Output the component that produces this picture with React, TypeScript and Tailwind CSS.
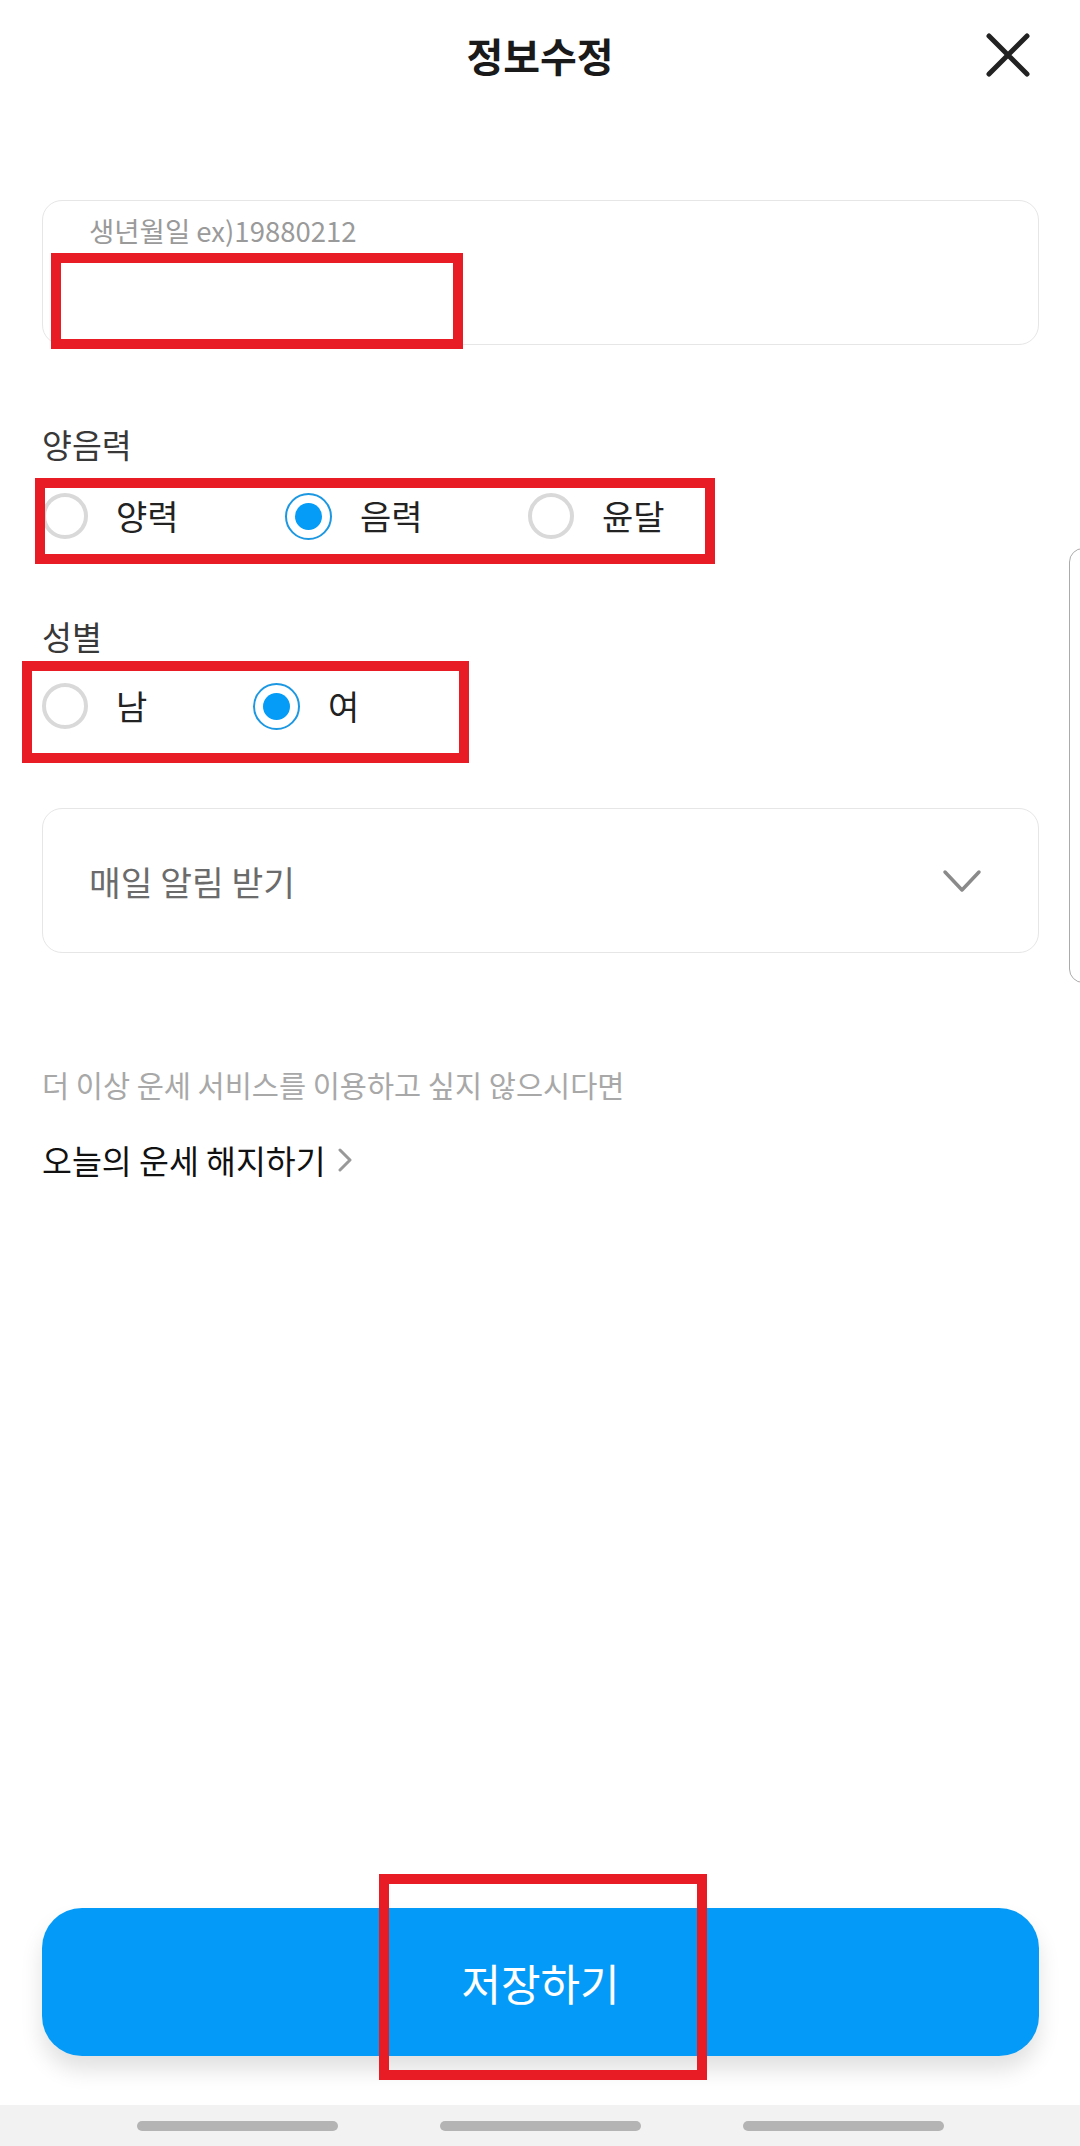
import { useState } from "react";

const RED_BOXES = [
  "left-[51px] top-[253px] w-[412px] h-[96px]",
  "left-[35px] top-[478px] w-[680px] h-[86px]",
  "left-[22px] top-[661px] w-[447px] h-[102px]",
  "left-[379px] top-[1874px] w-[328px] h-[206px]",
];

function Radio({ checked }: { checked: boolean }) {
  if (checked) {
    return (
      <span className="w-[47px] h-[47px] rounded-full border-2 border-[#1c98e2] flex items-center justify-center shrink-0">
        <span className="w-[27px] h-[27px] rounded-full bg-[#049cf6]" />
      </span>
    );
  }
  return <span className="w-[46px] h-[46px] rounded-full border-4 border-[#d9d9d9] shrink-0" />;
}

function RadioItem({
  label,
  checked,
  onClick,
  width,
}: {
  label: string;
  checked: boolean;
  onClick: () => void;
  width: string;
}) {
  return (
    <button onClick={onClick} className={`flex items-center gap-[28px] h-[60px] ${width}`}>
      <Radio checked={checked} />
      <span className="text-[34px] leading-[40px] text-[#222]">{label}</span>
    </button>
  );
}

export default function App() {
  const [calendar, setCalendar] = useState("음력");
  const [gender, setGender] = useState("여");

  return (
    <div className="relative w-[1080px] h-[2146px] bg-white overflow-hidden flex flex-col font-['Noto_Sans_CJK_KR','Noto_Sans',sans-serif]">
      {/* Header */}
      <header className="h-[110px] grid grid-cols-[1fr_auto_1fr] items-center">
        <div />
        <h1 className="text-[40px] leading-[48px] font-bold text-[#1a1a1a]">정보수정</h1>
        <div className="flex justify-end pr-[48px]">
          <svg width="48" height="48" viewBox="0 0 48 48" fill="none">
            <path d="M5 5 L43 43 M43 5 L5 43" stroke="#222" strokeWidth="5" strokeLinecap="round" />
          </svg>
        </div>
      </header>

      <div className="px-[42px] pr-[41px] flex flex-col">
        {/* Birth date input */}
        <div className="mt-[90px] h-[145px] rounded-[20px] border border-[#e6e6e6] pl-[46px] pt-[12px]">
          <p className="text-[27.5px] leading-[34px] text-[#9a9a9a]">생년월일 ex)19880212</p>
        </div>

        {/* 양음력 */}
        <p className="mt-[79px] text-[32.5px] leading-[40px] text-[#383838]">양음력</p>
        <div className="mt-[22px] flex">
          {["양력", "음력", "윤달"].map((v) => (
            <RadioItem key={v} label={v} checked={calendar === v} onClick={() => setCalendar(v)} width="w-[243px]" />
          ))}
        </div>

        {/* 성별 */}
        <p className="mt-[70px] text-[32.5px] leading-[40px] text-[#383838]">성별</p>
        <div className="mt-[20px] flex">
          {["남", "여"].map((v) => (
            <RadioItem key={v} label={v} checked={gender === v} onClick={() => setGender(v)} width="w-[211px]" />
          ))}
        </div>

        {/* Daily alert dropdown */}
        <div className="mt-[72px] h-[145px] rounded-[20px] border border-[#e6e6e6] pl-[46px] pr-[56px] flex items-center justify-between">
          <span className="text-[34.5px] leading-[44px] text-[#6b6b6b]">매일 알림 받기</span>
          <svg width="40" height="24" viewBox="0 0 40 24" fill="none">
            <polyline points="3,3 20,21 37,3" stroke="#8a8a8a" strokeWidth="3.5" strokeLinecap="round" strokeLinejoin="round" />
          </svg>
        </div>

        <p className="mt-[113px] text-[29.5px] leading-[36px] text-[#a8a8a8]">
          더 이상 운세 서비스를 이용하고 싶지 않으시다면
        </p>
        <button className="mt-[38px] flex items-center gap-[12px] self-start">
          <span className="text-[32.5px] leading-[40px] text-[#111]">오늘의 운세 해지하기</span>
          <svg width="14" height="24" viewBox="0 0 14 24" fill="none">
            <polyline points="2,2 12,12 2,22" stroke="#999" strokeWidth="3" strokeLinecap="round" strokeLinejoin="round" />
          </svg>
        </button>
      </div>

      {/* Save button */}
      <div className="mt-auto px-[42px] pr-[41px] pb-[49px]">
        <button className="w-full h-[148px] rounded-[40px] bg-[#049bf8] text-white text-[43px] leading-[50px] shadow-[0_14px_22px_rgba(0,0,0,0.12)]">
          저장하기
        </button>
      </div>

      {/* Android nav bar */}
      <nav className="h-[41px] bg-[#f2f2f2] flex items-center justify-center gap-[102px]">
        <span className="w-[201px] h-[10px] rounded-full bg-[#b4b4b4]" />
        <span className="w-[201px] h-[10px] rounded-full bg-[#b4b4b4]" />
        <span className="w-[201px] h-[10px] rounded-full bg-[#b4b4b4]" />
      </nav>

      {/* Edge panel handle */}
      <div className="absolute left-[1069px] top-[548px] w-[30px] h-[435px] rounded-[14px] border-[1.5px] border-[#ababab]" />

      {/* Annotation boxes */}
      {RED_BOXES.map((c) => (
        <div key={c} className={`absolute ${c} border-[10px] border-[#e81c24] pointer-events-none`} />
      ))}
    </div>
  );
}
